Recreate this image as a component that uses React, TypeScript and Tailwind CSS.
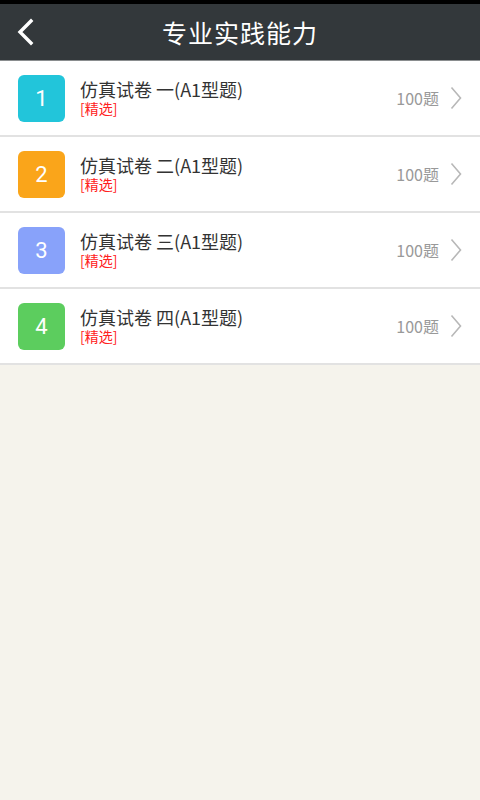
const papers = [
  { id: 1, label: '一', color: 'bg-[#22c5da]' },
  { id: 2, label: '二', color: 'bg-[#faa51a]' },
  { id: 3, label: '三', color: 'bg-[#88a2fa]' },
  { id: 4, label: '四', color: 'bg-[#5ccd5e]' },
];

const font = { fontFamily: '"Noto Sans CJK SC", "Noto Sans", sans-serif' };

export default function App() {
  return (
    <div className="flex min-h-[800px] w-[480px] flex-col bg-[#f5f3ec]" style={font}>
      {/* Status strip + header */}
      <div className="h-[4px] bg-black" />
      <div className="relative flex h-[56px] items-center justify-center bg-[#33383b]">
        <svg className="absolute left-[14px] top-[14px]" width="22" height="28" viewBox="0 0 22 28">
          <path d="M17 3 L6 14 L17 25" fill="none" stroke="#fff" strokeWidth="3.4" strokeLinecap="square" />
        </svg>
        <h1 className="text-[25px] leading-none tracking-[1px] text-white">专业实践能力</h1>
      </div>
      <div className="h-px bg-[#8a8d8f]" />

      {/* List */}
      <ul className="flex flex-col">
        {papers.map((p) => (
          <li
            key={p.id}
            className="flex h-[76px] items-center border-b-2 border-[#e2e2e2] bg-white pl-[18px] pr-[18px]"
          >
            <div
              className={`flex h-[47px] w-[47px] shrink-0 items-center justify-center rounded-[6px] text-[22px] text-white ${p.color}`}
              style={{ fontFamily: 'Roboto, sans-serif' }}
            >
              {p.id}
            </div>
            <div className="ml-[15px] flex flex-1 flex-col pb-[2px]">
              <span className="text-[18px] leading-[20px] text-[#333]">仿真试卷 {p.label}(A1型题)</span>
              <span className="mt-[1px] text-[14px] leading-[16px] text-[#ff2020]">[精选]</span>
            </div>
            <span className="mr-[11px] text-[16px] leading-[20px] text-[#999]">100题</span>
            <svg width="12" height="24" viewBox="0 0 12 24">
              <path d="M1.5 1.5 L10.5 12 L1.5 22.5" fill="none" stroke="#b8b8b8" strokeWidth="1.6" />
            </svg>
          </li>
        ))}
      </ul>
    </div>
  );
}
